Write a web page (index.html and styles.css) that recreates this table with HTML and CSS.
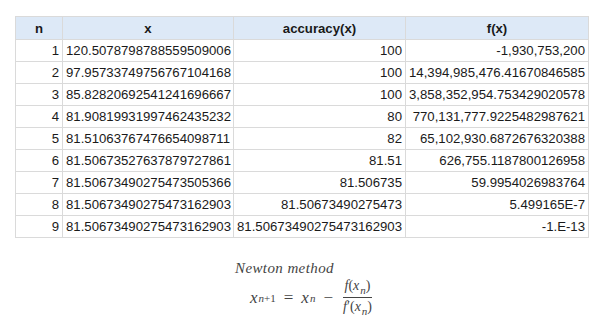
FILE: index.html
```html
<!DOCTYPE html>
<html>
	<head>
		<meta charset="UTF-8">
		<title>Newton method</title>
		<link rel="stylesheet" href="styles.css">
	</head>
	<body>
		<table class="grid">
			<colgroup>
				<col class="c-n">
				<col class="c-x">
				<col class="c-acc">
				<col class="c-f">
			</colgroup>
			<thead>
				<tr><th>n</th><th>x</th><th>accuracy(x)</th><th>f(x)</th></tr>
			</thead>
			<tbody>
				<tr><td>1</td><td class="left">120.5078798788559509006</td><td>100</td><td>-1,930,753,200</td></tr>
				<tr><td>2</td><td class="left">97.95733749756767104168</td><td>100</td><td>14,394,985,476.41670846585</td></tr>
				<tr><td>3</td><td class="left">85.82820692541241696667</td><td>100</td><td>3,858,352,954.753429020578</td></tr>
				<tr><td>4</td><td class="left">81.90819931997462435232</td><td>80</td><td>770,131,777.9225482987621</td></tr>
				<tr><td>5</td><td class="left">81.51063767476654098711</td><td>82</td><td>65,102,930.6872676320388</td></tr>
				<tr><td>6</td><td class="left">81.50673527637879727861</td><td>81.51</td><td>626,755.1187800126958</td></tr>
				<tr><td>7</td><td class="left">81.50673490275473505366</td><td>81.506735</td><td>59.9954026983764</td></tr>
				<tr><td>8</td><td class="left">81.50673490275473162903</td><td>81.50673490275473</td><td>5.499165E-7</td></tr>
				<tr><td>9</td><td class="left">81.50673490275473162903</td><td>81.50673490275473162903</td><td>-1.E-13</td></tr>
			</tbody>
		</table>

		<div class="formula">
			<div class="title">Newton method</div>
			<div class="eq">
				<span class="v">x</span><sub><span class="v">n</span>+1</sub>
				<span class="op">=</span>
				<span class="v">x</span><sub class="v">n</sub>
				<span class="op">&minus;</span>
				<span class="frac">
					<span class="num"><span class="v">f</span>(<span class="v">x</span><sub class="v">n</sub>)</span>
					<span class="den"><span class="v">f</span>&prime;(<span class="v">x</span><sub class="v">n</sub>)</span>
				</span>
			</div>
		</div>
	</body>
</html>
```

FILE: styles.css
```css
* {
	margin: 0;
	padding: 0;
}

body {
	background: #fff;
	color: #1a1a1a;
	font-family: "Liberation Sans", Arial, sans-serif;
	padding: 16px 0 0 15px;
}

.grid {
	border-collapse: collapse;
	font-size: 13.2px;
	table-layout: fixed;
	width: 573px;
}

.c-n { width: 47px; }
.c-x { width: 171px; }
.c-acc { width: 172px; }
.c-f { width: 183px; }

.grid th,
.grid td {
	border: 1px solid #dadada;
	height: 21px;
	padding: 0 3px;
	white-space: nowrap;
	overflow: hidden;
}

.grid th {
	background: #dde9f7;
	font-weight: bold;
	text-align: center;
	height: 22px;
}

.grid td {
	text-align: right;
}

.grid td.left {
	text-align: left;
}

.formula {
	color: #444;
	font-family: "Liberation Serif", "Times New Roman", serif;
	margin: 22px 0 0 220px;
}

.title {
	font-style: italic;
	font-size: 15px;
	letter-spacing: 0.4px;
}

.eq {
	display: flex;
	align-items: center;
	font-size: 17px;
	margin: 1px 0 0 15px;
	white-space: nowrap;
}

.v {
	font-style: italic;
}

.eq sub {
	font-size: 11px;
	vertical-align: -4px;
	margin-left: 1px;
}

.op {
	margin: 0 8px;
}

.frac {
	display: inline-flex;
	flex-direction: column;
	align-items: center;
	font-size: 14px;
}

.num {
	padding: 0 2px 1px;
	border-bottom: 1px solid #444;
}

.den {
	padding: 1px 2px 0;
}
```
